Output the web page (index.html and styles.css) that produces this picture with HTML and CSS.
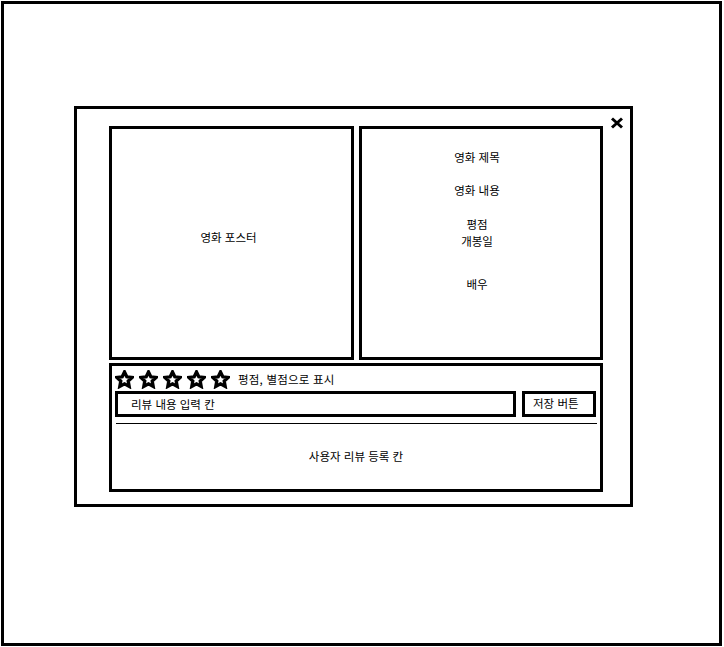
FILE: index.html
```html
<!DOCTYPE html>
<html lang="ko">
<head>
<meta charset="utf-8">
<title>영화 상세</title>
<link rel="stylesheet" href="styles.css">
</head>
<body>
<div class="frame">
  <div class="modal">
    <svg class="close" width="14" height="12" viewBox="0 0 14 12" aria-label="닫기">
      <path d="M2 1.5L12 10.5M12 1.5L2 10.5" stroke="#000" stroke-width="3" fill="none"/>
    </svg>
    <div class="top">
      <div class="poster"><span>영화 포스터</span></div>
      <div class="info">
        <div class="info-line title">영화 제목</div>
        <div class="info-line content">영화 내용</div>
        <div class="info-line rating">평점</div>
        <div class="info-line release">개봉일</div>
        <div class="info-line actors">배우</div>
      </div>
    </div>
    <div class="review">
      <div class="stars-row">
        <div class="stars">
          <svg class="star" viewBox="0 0 24 24"><path d="M12 2.5l2.9 6.1 6.6.9-4.8 4.6 1.2 6.6L12 17.5l-5.9 3.2 1.2-6.6-4.8-4.6 6.6-.9z"/></svg>
          <svg class="star" viewBox="0 0 24 24"><path d="M12 2.5l2.9 6.1 6.6.9-4.8 4.6 1.2 6.6L12 17.5l-5.9 3.2 1.2-6.6-4.8-4.6 6.6-.9z"/></svg>
          <svg class="star" viewBox="0 0 24 24"><path d="M12 2.5l2.9 6.1 6.6.9-4.8 4.6 1.2 6.6L12 17.5l-5.9 3.2 1.2-6.6-4.8-4.6 6.6-.9z"/></svg>
          <svg class="star" viewBox="0 0 24 24"><path d="M12 2.5l2.9 6.1 6.6.9-4.8 4.6 1.2 6.6L12 17.5l-5.9 3.2 1.2-6.6-4.8-4.6 6.6-.9z"/></svg>
          <svg class="star" viewBox="0 0 24 24"><path d="M12 2.5l2.9 6.1 6.6.9-4.8 4.6 1.2 6.6L12 17.5l-5.9 3.2 1.2-6.6-4.8-4.6 6.6-.9z"/></svg>
        </div>
        <span class="stars-label">평점, 별점으로 표시</span>
      </div>
      <div class="input-row">
        <div class="review-input">리뷰 내용 입력 칸</div>
        <div class="save-btn">저장 버튼</div>
      </div>
      <div class="divider"></div>
      <div class="review-list">사용자 리뷰 등록 칸</div>
    </div>
  </div>
</div>
</body>
</html>
```

FILE: styles.css
```css
html, body {
  margin: 0;
  padding: 0;
  background: #fff;
}

body {
  font-family: "Noto Sans CJK KR", "Noto Sans", sans-serif;
  font-size: 11.5px;
  color: #000;
}

.frame {
  margin: 1px;
  width: 721px;
  height: 645px;
  box-sizing: border-box;
  border: 3px solid #000;
  padding: 102px 0 0 70px;
}

.modal {
  position: relative;
  width: 559px;
  height: 401px;
  box-sizing: border-box;
  border: 3px solid #000;
  padding: 17px 27px 12px 32px;
  display: flex;
  flex-direction: column;
}

.close {
  position: absolute;
  top: 8px;
  right: 6px;
}

.top {
  display: flex;
  gap: 5px;
  height: 234px;
}

.poster {
  width: 245px;
  box-sizing: border-box;
  border: 3px solid #000;
  display: flex;
  align-items: center;
  justify-content: center;
  padding: 0 6px 12px 0;
}

.info {
  width: 244px;
  box-sizing: border-box;
  border: 3px solid #000;
  display: flex;
  flex-direction: column;
  align-items: center;
  padding: 20px 8px 0 0;
}

.info-line {
  line-height: 17px;
}

.content { margin-top: 16px; }
.rating { margin-top: 17px; }
.release { margin-top: 0; }
.actors { margin-top: 26px; }

.review {
  margin-top: 3px;
  flex: 1;
  box-sizing: border-box;
  border: 3px solid #000;
  display: flex;
  flex-direction: column;
  padding: 4px 0 0 3px;
}

.stars-row {
  display: flex;
  align-items: center;
  height: 18px;
}

.stars {
  display: flex;
  gap: 5px;
}

.star {
  width: 19px;
  height: 19px;
  fill: none;
  stroke: #000;
  stroke-width: 4.2;
  stroke-linejoin: miter;
}

.stars-label {
  margin-left: 8px;
  line-height: 18px;
  letter-spacing: 0.2px;
}

.input-row {
  display: flex;
  gap: 6px;
  margin-top: 3px;
  height: 26px;
}

.review-input {
  width: 401px;
  box-sizing: border-box;
  border: 3px solid #000;
  display: flex;
  align-items: center;
  padding-left: 13px;
}

.save-btn {
  width: 74px;
  box-sizing: border-box;
  border: 3px solid #000;
  display: flex;
  align-items: center;
  padding: 0 0 3px 8px;
}

.divider {
  margin: 6px 3px 0 1px;
  height: 1px;
  background: #000;
}

.review-list {
  flex: 1;
  display: flex;
  align-items: center;
  justify-content: center;
  padding: 0 3px 2px 0;
}
```
